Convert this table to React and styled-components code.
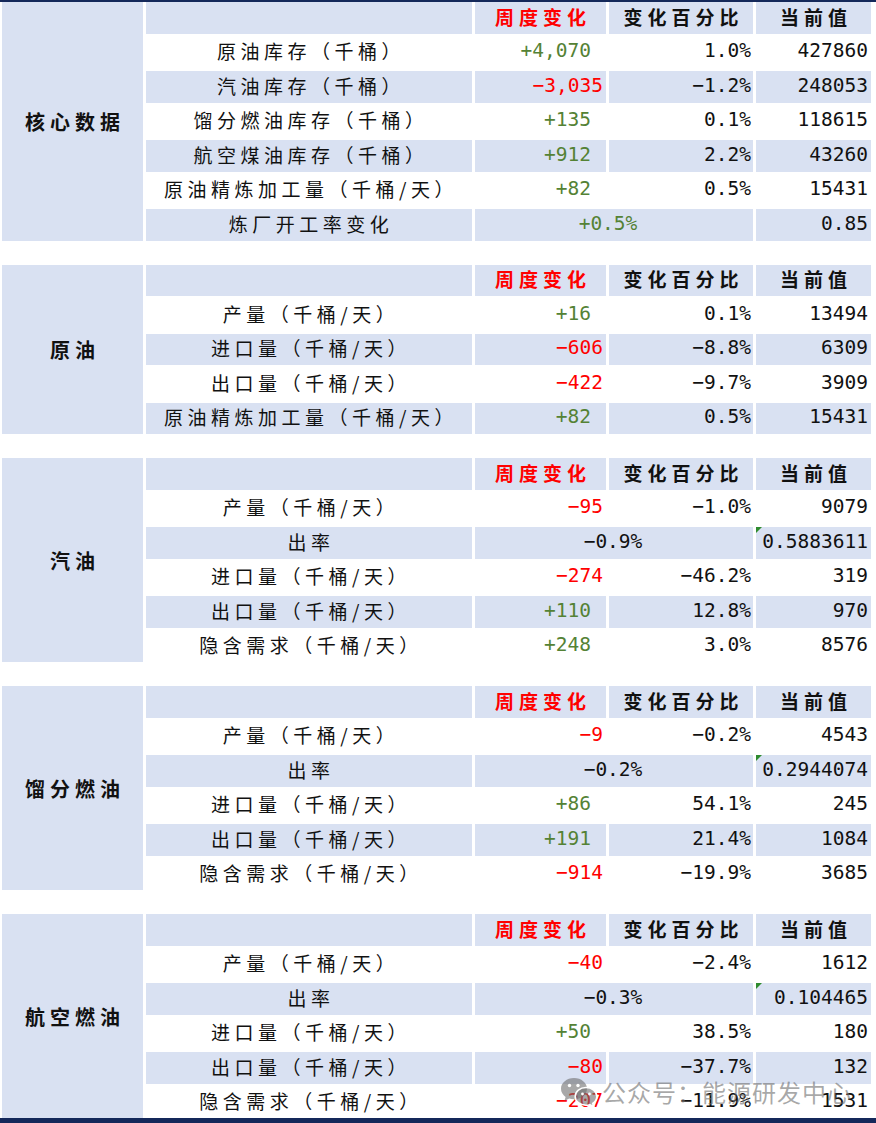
import React from "react";
import styled, { createGlobalStyle } from "styled-components";

const GREEN = "#548235";
const RED = "#ff0000";
const BLUE = "#d9e1f2";
const NAVY = "#14285a";

const sections = [
  {
    title: "核心数据",
    rows: [
      { label: "原油库存（千桶）", chg: "+4,070", pct: "1.0%", cur: "427860" },
      { label: "汽油库存（千桶）", chg: "−3,035", pct: "−1.2%", cur: "248053" },
      { label: "馏分燃油库存（千桶）", chg: "+135", pct: "0.1%", cur: "118615" },
      { label: "航空煤油库存（千桶）", chg: "+912", pct: "2.2%", cur: "43260" },
      { label: "原油精炼加工量（千桶/天）", chg: "+82", pct: "0.5%", cur: "15431" },
      { label: "炼厂开工率变化", merged: "+0.5%", tone: "up", cur: "0.85" },
    ],
  },
  {
    title: "原油",
    rows: [
      { label: "产量（千桶/天）", chg: "+16", pct: "0.1%", cur: "13494" },
      { label: "进口量（千桶/天）", chg: "−606", pct: "−8.8%", cur: "6309" },
      { label: "出口量（千桶/天）", chg: "−422", pct: "−9.7%", cur: "3909" },
      { label: "原油精炼加工量（千桶/天）", chg: "+82", pct: "0.5%", cur: "15431" },
    ],
  },
  {
    title: "汽油",
    rows: [
      { label: "产量（千桶/天）", chg: "−95", pct: "−1.0%", cur: "9079" },
      { label: "出率", merged: "−0.9%", tone: "plain", cur: "0.5883611", flag: true },
      { label: "进口量（千桶/天）", chg: "−274", pct: "−46.2%", cur: "319" },
      { label: "出口量（千桶/天）", chg: "+110", pct: "12.8%", cur: "970" },
      { label: "隐含需求（千桶/天）", chg: "+248", pct: "3.0%", cur: "8576" },
    ],
  },
  {
    title: "馏分燃油",
    rows: [
      { label: "产量（千桶/天）", chg: "−9", pct: "−0.2%", cur: "4543" },
      { label: "出率", merged: "−0.2%", tone: "plain", cur: "0.2944074", flag: true },
      { label: "进口量（千桶/天）", chg: "+86", pct: "54.1%", cur: "245" },
      { label: "出口量（千桶/天）", chg: "+191", pct: "21.4%", cur: "1084" },
      { label: "隐含需求（千桶/天）", chg: "−914", pct: "−19.9%", cur: "3685" },
    ],
  },
  {
    title: "航空燃油",
    rows: [
      { label: "产量（千桶/天）", chg: "−40", pct: "−2.4%", cur: "1612" },
      { label: "出率", merged: "−0.3%", tone: "plain", cur: "0.104465", flag: true },
      { label: "进口量（千桶/天）", chg: "+50", pct: "38.5%", cur: "180" },
      { label: "出口量（千桶/天）", chg: "−80", pct: "−37.7%", cur: "132" },
      { label: "隐含需求（千桶/天）", chg: "−207", pct: "−11.9%", cur: "1531" },
    ],
  },
];

const GlobalStyle = createGlobalStyle`
  html, body {
    margin: 0;
    padding: 0;
    background: #fff;
  }
  body {
    font-family: "Noto Sans CJK SC", sans-serif;
  }
`;

const Page = styled.div`
  position: relative;
  width: 876px;
  height: 1123px;
  box-sizing: border-box;
  border-top: 2px solid ${NAVY};
  border-bottom: 5px solid ${NAVY};
  overflow: hidden;
  background: #fff;
`;

const Sections = styled.div`
  display: flex;
  flex-direction: column;
  gap: 24px;
  padding-left: 2px;
`;

const Block = styled.section`
  display: grid;
  grid-template-columns: 141px 326px 131px 144px 115px;
  grid-template-rows: repeat(${(p) => p.$rows}, 31.5px);
  gap: 3px;
`;

const Title = styled.div`
  grid-row: 1 / span ${(p) => p.$rows};
  background: ${BLUE};
  display: flex;
  align-items: center;
  justify-content: center;
  font-family: "Noto Sans CJK SC", sans-serif;
  font-weight: 700;
  font-size: 20px;
  letter-spacing: 5px;
  padding-left: 5px;
  color: #111;
`;

const Cell = styled.div`
  position: relative;
  background: ${(p) => (p.$shaded ? BLUE : "#fff")};
  display: flex;
  align-items: center;
  box-sizing: border-box;
  padding-bottom: 3px;
  white-space: pre;
  overflow: visible;
`;

const HeadCell = styled(Cell)`
  justify-content: center;
  font-weight: 700;
  font-size: 19px;
  letter-spacing: 5px;
  padding-left: 5px;
  color: ${(p) => (p.$red ? RED : "#111")};
`;

const Label = styled(Cell)`
  justify-content: center;
  font-size: 19px;
  letter-spacing: 4.5px;
  padding-left: 4px;
  color: #111;
`;

const Num = styled(Cell)`
  grid-column: span ${(p) => p.$span || 1};
  justify-content: ${(p) => (p.$center ? "center" : "flex-end")};
  font-family: "DejaVu Sans Mono", "Liberation Mono", monospace;
  font-size: 19.5px;
  padding-right: ${(p) => p.$pad || 2}px;
  color: ${(p) => (p.$tone === "up" ? GREEN : p.$tone === "down" ? RED : "#111")};
  ${(p) =>
    p.$flag &&
    `
    &::before {
      content: "";
      position: absolute;
      left: 0;
      top: 0;
      border-top: 6px solid #2e8b2e;
      border-right: 6px solid transparent;
    }
  `}
`;

const Watermark = styled.div`
  position: absolute;
  left: 560px;
  top: 1072px;
  display: flex;
  align-items: center;
  gap: 4px;
  color: rgba(110, 110, 110, 0.6);
  font-family: "Noto Sans CJK SC", sans-serif;
  font-size: 24px;
  letter-spacing: 1px;
  pointer-events: none;
`;

function WeChatIcon() {
  return (
    <svg width="38" height="30" viewBox="0 0 38 30">
      <g fill="rgba(110,110,110,0.6)">
        <path d="M14 1C6.8 1 1 5.8 1 11.7c0 3.3 1.8 6.2 4.6 8.2L4.4 24l4.7-2.4c1.5.4 3.2.7 4.9.7 7.2 0 13-4.8 13-10.6S21.2 1 14 1z" />
        <path
          d="M26 10.5c-6 0-10.8 4-10.8 8.9s4.8 8.9 10.8 8.9c1.3 0 2.6-.2 3.8-.6l3.9 2-1-3.4c2.5-1.6 4.1-4.1 4.1-6.9 0-4.9-4.8-8.9-10.8-8.9z"
          stroke="#fff"
          strokeWidth="1.6"
        />
      </g>
      <g fill="#fff">
        <circle cx="9.5" cy="8.5" r="1.7" />
        <circle cx="18" cy="8.5" r="1.7" />
        <circle cx="22.5" cy="17" r="1.4" />
        <circle cx="29.5" cy="17" r="1.4" />
      </g>
    </svg>
  );
}

function changeTone(v) {
  return v.startsWith("+") ? "up" : "down";
}

function Section({ data }) {
  const total = data.rows.length + 1;
  return (
    <Block $rows={total}>
      <Title $rows={total}>{data.title}</Title>
      <HeadCell $shaded />
      <HeadCell $shaded $red>周度变化</HeadCell>
      <HeadCell $shaded>变化百分比</HeadCell>
      <HeadCell $shaded>当前值</HeadCell>
      {data.rows.map((r, i) => {
        const shaded = i % 2 === 1;
        return (
          <React.Fragment key={i}>
            <Label $shaded={shaded}>{r.label}</Label>
            {r.merged ? (
              <Num
                $shaded={shaded}
                $span={2}
                $center
                $tone={r.tone}
                $pad={r.tone === "up" ? 12 : 0}
              >
                {r.merged}
              </Num>
            ) : (
              <>
                <Num
                  $shaded={shaded}
                  $tone={changeTone(r.chg)}
                  $pad={r.chg.startsWith("+") ? 15 : 3}
                >
                  {r.chg}
                </Num>
                <Num $shaded={shaded}>{r.pct}</Num>
              </>
            )}
            <Num $shaded={shaded} $flag={r.flag} $pad={3}>
              {r.cur}
            </Num>
          </React.Fragment>
        );
      })}
    </Block>
  );
}

export default function App() {
  return (
    <>
      <GlobalStyle />
      <Page>
        <Sections>
          {sections.map((s) => (
            <Section key={s.title} data={s} />
          ))}
        </Sections>
        <Watermark>
          <WeChatIcon />
          <span>公众号：能源研发中心</span>
        </Watermark>
      </Page>
    </>
  );
}
